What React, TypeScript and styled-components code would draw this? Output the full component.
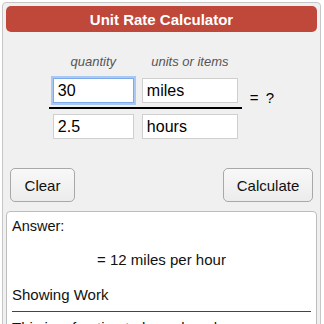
import React from 'react';
import styled, { createGlobalStyle } from 'styled-components';

const GlobalStyle = createGlobalStyle`
  html, body {
    margin: 0;
    padding: 0;
    background: #ffffff;
    font-family: "Liberation Sans", Arial, sans-serif;
    overflow: hidden;
  }
`;

const Calculator = styled.div`
  margin: 2px 3px 0 2px;
  height: 340px;
  border: 1px solid #c6c6c6;
  border-radius: 4px;
  background: #f0f0f0;
  display: flex;
  flex-direction: column;
`;

const Header = styled.div`
  margin: 3px 3px 0 3px;
  height: 26px;
  border-radius: 5px;
  background: #c0483b;
  color: #ffffff;
  font-size: 15px;
  font-weight: bold;
  display: flex;
  align-items: center;
  justify-content: center;
`;

const Equation = styled.div`
  display: flex;
  justify-content: center;
  align-items: center;
  margin-top: 22px;
  gap: 8px;
`;

const Fraction = styled.div`
  display: grid;
  grid-template-columns: 81px 96px;
  column-gap: 8px;
  padding: 0 4px;
`;

const Label = styled.div`
  font-size: 13px;
  font-style: italic;
  color: #555555;
  text-align: center;
  height: 24px;
`;

const Divider = styled.div`
  grid-column: 1 / span 2;
  height: 2px;
  background: #000000;
  margin: 4px -4px 5px -4px;
`;

const Field = styled.input<{ $focused?: boolean }>`
  box-sizing: border-box;
  width: 100%;
  height: 25px;
  margin: 0;
  padding: 0 4px;
  font-family: "Liberation Sans", Arial, sans-serif;
  font-size: 16px;
  color: #000000;
  background: #ffffff;
  border: 1px solid ${(p) => (p.$focused ? '#7eaaea' : '#cfcfcf')};
  box-shadow: ${(p) => (p.$focused ? '0 0 0 2px #a9c8f3' : 'none')};
  outline: none;
`;

const Result = styled.div`
  font-size: 15px;
  color: #000000;
  margin-top: 2px;
  word-spacing: 3px;
`;

const ButtonRow = styled.div`
  display: flex;
  justify-content: space-between;
  padding: 0 7px;
  margin-top: 29px;
`;

const Button = styled.button<{ $width: number }>`
  width: ${(p) => p.$width}px;
  height: 34px;
  font-family: "Liberation Sans", Arial, sans-serif;
  font-size: 15px;
  color: #111111;
  background: linear-gradient(#f8f8f8, #ececec);
  border: 1px solid #a8a8a8;
  border-radius: 5px;
  padding: 0;
`;

const AnswerBox = styled.div`
  margin: 9px 3px 0 3px;
  flex: 1;
  background: #ffffff;
  border: 1px solid #bdbdbd;
  border-radius: 4px;
  padding: 6px 5px 0 5px;
  font-size: 15px;
  color: #111111;
`;

const AnswerLabel = styled.div`
  font-size: 14.5px;
`;

const AnswerValue = styled.div`
  text-align: center;
  margin-top: 17px;
`;

const WorkTitle = styled.div`
  margin-top: 18px;
  padding-bottom: 8px;
  border-bottom: 1px solid #444444;
`;

const WorkText = styled.div`
  margin-top: 7px;
`;

export default function App() {
  return (
    <>
      <GlobalStyle />
      <Calculator>
        <Header>Unit Rate Calculator</Header>
        <Equation>
          <Fraction>
            <Label>quantity</Label>
            <Label>units or items</Label>
            <Field $focused defaultValue="30" />
            <Field defaultValue="miles" />
            <Divider />
            <Field defaultValue="2.5" />
            <Field defaultValue="hours" />
          </Fraction>
          <Result>= ?</Result>
        </Equation>
        <ButtonRow>
          <Button $width={65}>Clear</Button>
          <Button $width={90}>Calculate</Button>
        </ButtonRow>
        <AnswerBox>
          <AnswerLabel>Answer:</AnswerLabel>
          <AnswerValue>= 12 miles per hour</AnswerValue>
          <WorkTitle>Showing Work</WorkTitle>
          <WorkText>This is a fraction to be reduced</WorkText>
        </AnswerBox>
      </Calculator>
    </>
  );
}
